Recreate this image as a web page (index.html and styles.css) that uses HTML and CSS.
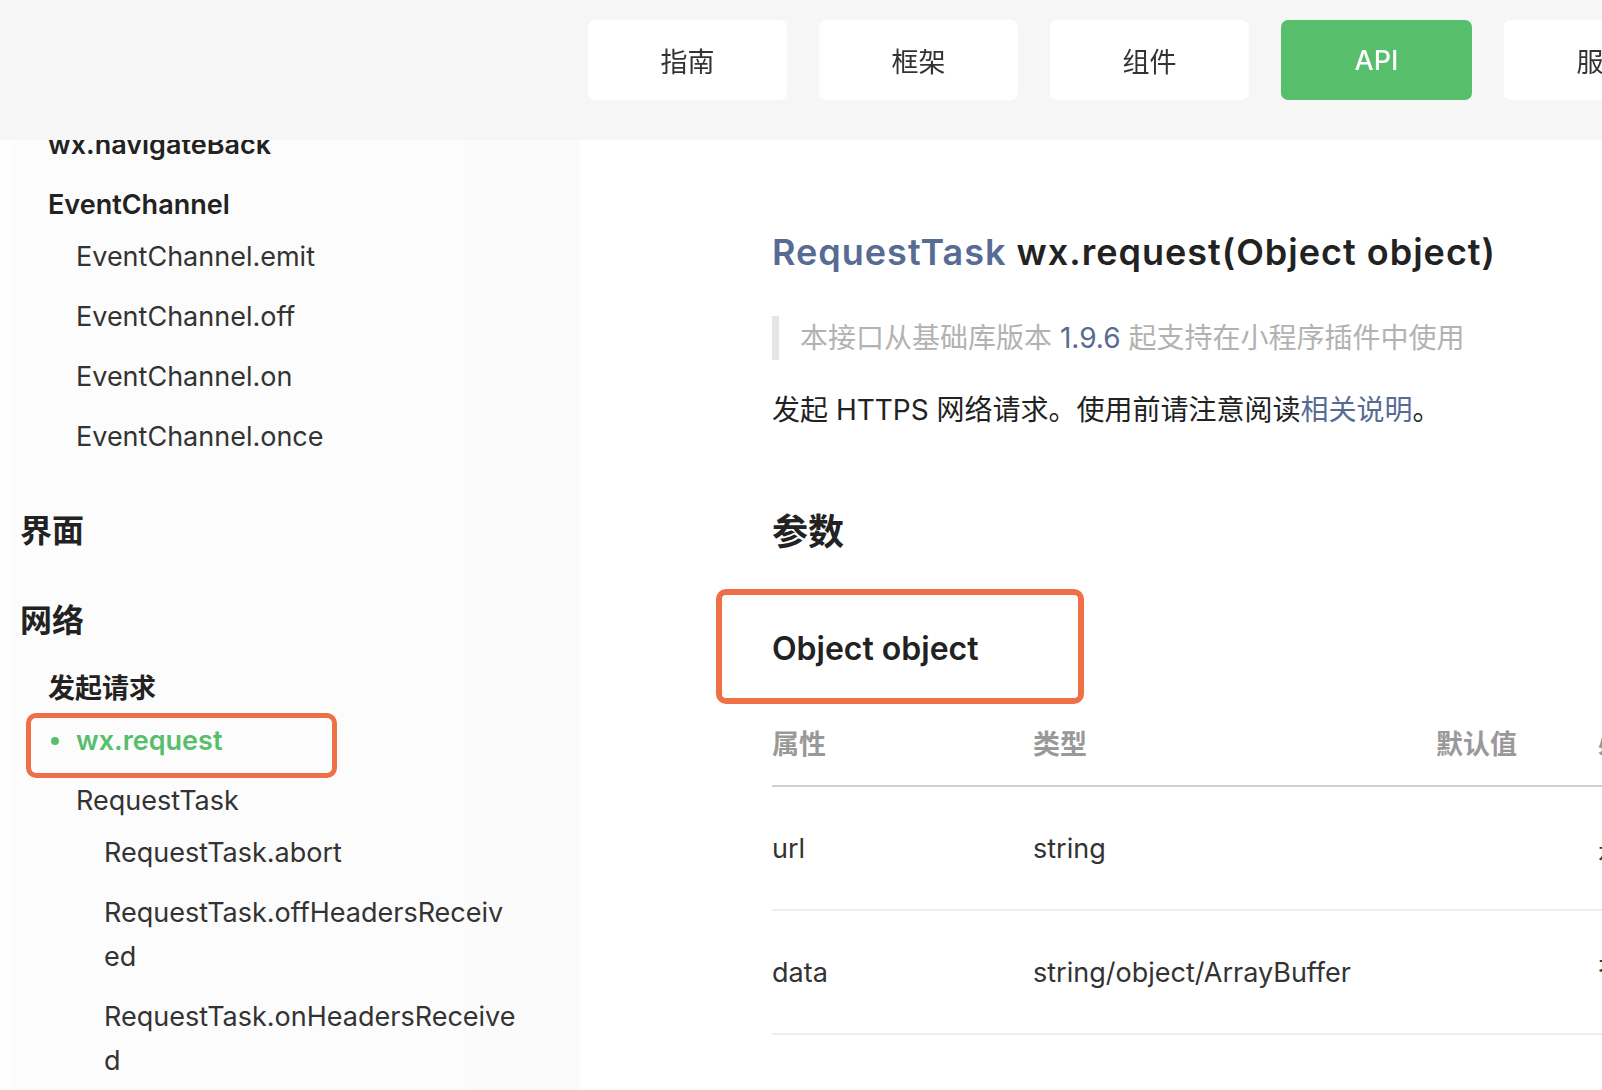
FILE: index.html
```html
<!DOCTYPE html>
<html lang="zh-CN">
<head>
<meta charset="utf-8">
<title>wx.request</title>
<link rel="stylesheet" href="styles.css">
</head>
<body>
<header class="topbar">
  <nav class="topnav">
    <a class="tab">指南</a>
    <a class="tab">框架</a>
    <a class="tab">组件</a>
    <a class="tab tab-active">API</a>
    <a class="tab">服务</a>
  </nav>
</header>
<div class="page">
  <aside class="sidebar">
    <ul class="menu">
      <li class="item l2 strong">wx.navigateBack</li>
      <li class="group-title l2">EventChannel</li>
      <li class="item l3">EventChannel.emit</li>
      <li class="item l3">EventChannel.off</li>
      <li class="item l3">EventChannel.on</li>
      <li class="item l3">EventChannel.once</li>
      <li class="section first-section">界面</li>
      <li class="section">网络</li>
      <li class="group-title l2 first">发起请求</li>
      <li class="item l3 active">wx.request</li>
      <li class="group-title l3 plain">RequestTask</li>
      <li class="item l4">RequestTask.abort</li>
      <li class="item l4"><span class="nw">RequestTask.offHeadersReceiv</span><br>ed</li>
      <li class="item l4"><span class="nw">RequestTask.onHeadersReceive</span><br>d</li>
    </ul>
  </aside>
  <main class="content">
    <h1 class="title"><span class="ret">RequestTask</span> wx.request(Object object)</h1>
    <blockquote class="note">本接口从基础库版本 <span class="ver">1.9.6</span> 起支持在小程序插件中使用</blockquote>
    <p class="desc">发起 HTTPS 网络请求。使用前请注意阅读<a class="link">相关说明</a>。</p>
    <h2 class="sub">参数</h2>
    <h3 class="param">Object object</h3>
    <table class="props">
      <thead>
        <tr><th class="c1">属性</th><th class="c2">类型</th><th class="c3">默认值</th><th class="c4">必填</th></tr>
      </thead>
      <tbody>
        <tr><td>url</td><td>string</td><td></td><td>是</td></tr>
        <tr><td>data</td><td>string/object/ArrayBuffer</td><td></td><td>否</td></tr>
      </tbody>
    </table>
  </main>
</div>
</body>
</html>
```
FILE: styles.css
```css
*, *::before, *::after { box-sizing: border-box; }
html, body {
  margin: 0;
  padding: 0;
  background: #ffffff;
  overflow: hidden;
  height: 1090px;
}
body {
  font-family: Inter, "Noto Sans CJK SC", sans-serif;
  color: #222222;
}

/* top bar */
.topbar {
  position: fixed;
  top: 0;
  left: 0;
  right: 0;
  height: 140px;
  background: #f6f6f6;
  z-index: 10;
}
.topnav {
  display: flex;
  gap: 32px;
  padding: 20px 0 0 588px;
  white-space: nowrap;
}
.tab {
  flex: none;
  display: flex;
  align-items: center;
  justify-content: center;
  width: 199px;
  height: 80px;
  background: #ffffff;
  border-radius: 7px;
  font-size: 27px;
  color: #333333;
}
.tab-active {
  width: 191px;
  background: #57be6b;
  color: #ffffff;
  font-weight: 500;
}

/* layout */
.page {
  display: flex;
  height: 1090px;
}
.sidebar {
  flex: none;
  width: 580px;
  background: linear-gradient(to right, #fefefe 12px, #fcfcfc 12px, #fcfcfc 467px, #fbfbfb 467px);
  padding-top: 115px;
}
.menu {
  list-style: none;
  margin: 0;
  padding: 0;
  font-size: 27px;
  line-height: 44px;
  color: #333333;
}
.menu li { position: relative; }
.item { padding: 8px 0; }
.group-title {
  padding-top: 8px;
  font-weight: 600;
  color: #222222;
}
.group-title.first { padding-top: 22px; }
.group-title.plain { font-weight: 400; color: #333333; }
.strong { font-weight: 600; color: #222222; }
.l2 { padding-left: 48px; }
.l3 { padding-left: 76px; }
.l4 { padding-left: 104px; }
.section {
  padding: 42px 0 0 20px;
  font-size: 32px;
  line-height: 48px;
  font-weight: 700;
  color: #222222;
}
.first-section { padding-top: 40px; }
.nw { white-space: nowrap; }
.active {
  color: #57be6b;
  font-weight: 600;
}
.active::before {
  content: "";
  position: absolute;
  left: 51px;
  top: 26px;
  width: 8px;
  height: 8px;
  border-radius: 50%;
  background: #57be6b;
}
.active::after {
  content: "";
  position: absolute;
  left: 26px;
  top: 2px;
  width: 311px;
  height: 65px;
  border: 5px solid #ef7046;
  border-radius: 10px;
}

/* content */
.content {
  flex: 1;
  min-width: 0;
  padding: 227px 0 0 192px;
  overflow: hidden;
}
.title {
  margin: 0;
  font-size: 36px;
  line-height: 50px;
  font-weight: 600;
  letter-spacing: 1px;
  color: #222222;
  white-space: nowrap;
}
.ret { color: #576b95; }
.note {
  margin: 39px 0 0 0;
  height: 44px;
  border-left: 7px solid #e5e5e5;
  padding-left: 21px;
  font-size: 28px;
  line-height: 44px;
  color: #b2b2b2;
  white-space: nowrap;
}
.ver { color: #576b95; }
.desc {
  margin: 28px 0 0 0;
  font-size: 28px;
  line-height: 44px;
  color: #222222;
  white-space: nowrap;
}
.link { color: #576b95; }
.sub {
  margin: 75px 0 0 0;
  font-size: 36px;
  line-height: 50px;
  font-weight: 700;
  color: #222222;
}
.param {
  position: relative;
  margin: 70px 0 0 0;
  font-size: 32px;
  line-height: 44px;
  font-weight: 600;
  color: #222222;
}
.param::after {
  content: "";
  position: absolute;
  left: -56px;
  top: -38px;
  width: 368px;
  height: 115px;
  border: 6px solid #ef7046;
  border-radius: 10px;
}
.props {
  margin-top: 34px;
  border-collapse: collapse;
  table-layout: fixed;
  width: 1026px;
  font-size: 27px;
  line-height: 44px;
}
.props th {
  text-align: left;
  font-weight: 700;
  color: #999999;
  padding: 18px 0 18px 0;
  border-bottom: 2px solid #d0d0d0;
}
.props td {
  padding: 40px 0 38px 0;
  color: #333333;
  border-bottom: 2px solid #eeeeee;
  white-space: nowrap;
}
.c1 { width: 261px; }
.c2 { width: 403px; }
.c3 { width: 162px; }
.c4 { width: 200px; }
```
